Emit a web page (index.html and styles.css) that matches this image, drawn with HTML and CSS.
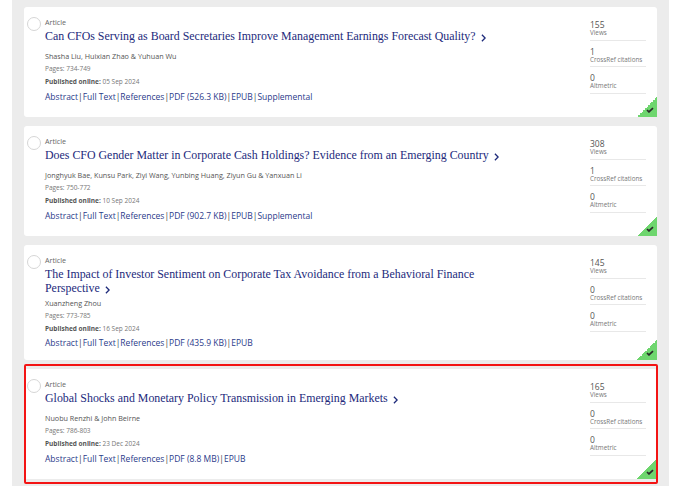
FILE: index.html
```html
<!DOCTYPE html>
<html lang="en">
<head>
<meta charset="utf-8">
<title>Articles</title>
<link rel="stylesheet" href="styles.css">
</head>
<body>
<main class="list">
  <article class="card">
    <span class="radio"></span>
    <div class="main">
      <div class="type">Article</div>
      <h3 class="title"><a>Can CFOs Serving as Board Secretaries Improve Management Earnings Forecast Quality?</a><svg class="chev" viewBox="0 0 6 10" width="5" height="8"><path d="M1 1l4 4-4 4" fill="none" stroke="#1d2a7a" stroke-width="1.6"/></svg></h3>
      <div class="authors">Shasha Liu, Huixian Zhao &amp; Yuhuan Wu</div>
      <div class="meta">Pages: 734-749</div>
      <div class="meta pub"><b>Published online:</b> 05 Sep 2024</div>
      <div class="links"><a>Abstract</a><i>|</i><a>Full Text</a><i>|</i><a>References</a><i>|</i><a>PDF (526.3 KB)</a><i>|</i><a>EPUB</a><i>|</i><a>Supplemental</a></div>
    </div>
    <div class="metrics">
      <div class="metric"><strong>155</strong><span>Views</span></div>
      <div class="metric"><strong>1</strong><span>CrossRef citations</span></div>
      <div class="metric"><strong>0</strong><span>Altmetric</span></div>
    </div>
    <span class="corner"><svg viewBox="0 0 10 8" width="8" height="6"><path d="M1 4l2.6 2.6L9 1.4" fill="none" stroke="#2a2a2a" stroke-width="2.2"/></svg></span>
  </article>
  <article class="card">
    <span class="radio"></span>
    <div class="main">
      <div class="type">Article</div>
      <h3 class="title"><a>Does CFO Gender Matter in Corporate Cash Holdings? Evidence from an Emerging Country</a><svg class="chev" viewBox="0 0 6 10" width="5" height="8"><path d="M1 1l4 4-4 4" fill="none" stroke="#1d2a7a" stroke-width="1.6"/></svg></h3>
      <div class="authors">Jonghyuk Bae, Kunsu Park, Ziyi Wang, Yunbing Huang, Ziyun Gu &amp; Yanxuan Li</div>
      <div class="meta">Pages: 750-772</div>
      <div class="meta pub"><b>Published online:</b> 10 Sep 2024</div>
      <div class="links"><a>Abstract</a><i>|</i><a>Full Text</a><i>|</i><a>References</a><i>|</i><a>PDF (902.7 KB)</a><i>|</i><a>EPUB</a><i>|</i><a>Supplemental</a></div>
    </div>
    <div class="metrics">
      <div class="metric"><strong>308</strong><span>Views</span></div>
      <div class="metric"><strong>1</strong><span>CrossRef citations</span></div>
      <div class="metric"><strong>0</strong><span>Altmetric</span></div>
    </div>
    <span class="corner"><svg viewBox="0 0 10 8" width="8" height="6"><path d="M1 4l2.6 2.6L9 1.4" fill="none" stroke="#2a2a2a" stroke-width="2.2"/></svg></span>
  </article>
  <article class="card card-wrapped">
    <span class="radio"></span>
    <div class="main">
      <div class="type">Article</div>
      <h3 class="title"><a>The Impact of Investor Sentiment on Corporate Tax Avoidance from a Behavioral Finance Perspective</a><svg class="chev" viewBox="0 0 6 10" width="5" height="8"><path d="M1 1l4 4-4 4" fill="none" stroke="#1d2a7a" stroke-width="1.6"/></svg></h3>
      <div class="authors">Xuanzheng Zhou</div>
      <div class="meta">Pages: 773-785</div>
      <div class="meta pub"><b>Published online:</b> 16 Sep 2024</div>
      <div class="links"><a>Abstract</a><i>|</i><a>Full Text</a><i>|</i><a>References</a><i>|</i><a>PDF (435.9 KB)</a><i>|</i><a>EPUB</a></div>
    </div>
    <div class="metrics">
      <div class="metric"><strong>145</strong><span>Views</span></div>
      <div class="metric"><strong>0</strong><span>CrossRef citations</span></div>
      <div class="metric"><strong>0</strong><span>Altmetric</span></div>
    </div>
    <span class="corner"><svg viewBox="0 0 10 8" width="8" height="6"><path d="M1 4l2.6 2.6L9 1.4" fill="none" stroke="#2a2a2a" stroke-width="2.2"/></svg></span>
  </article>
  <article class="card">
    <span class="radio"></span>
    <div class="main">
      <div class="type">Article</div>
      <h3 class="title"><a>Global Shocks and Monetary Policy Transmission in Emerging Markets</a><svg class="chev" viewBox="0 0 6 10" width="5" height="8"><path d="M1 1l4 4-4 4" fill="none" stroke="#1d2a7a" stroke-width="1.6"/></svg></h3>
      <div class="authors">Nuobu Renzhi &amp; John Beirne</div>
      <div class="meta">Pages: 786-803</div>
      <div class="meta pub"><b>Published online:</b> 23 Dec 2024</div>
      <div class="links"><a>Abstract</a><i>|</i><a>Full Text</a><i>|</i><a>References</a><i>|</i><a>PDF (8.8 MB)</a><i>|</i><a>EPUB</a></div>
    </div>
    <div class="metrics">
      <div class="metric"><strong>165</strong><span>Views</span></div>
      <div class="metric"><strong>0</strong><span>CrossRef citations</span></div>
      <div class="metric"><strong>0</strong><span>Altmetric</span></div>
    </div>
    <span class="corner"><svg viewBox="0 0 10 8" width="8" height="6"><path d="M1 4l2.6 2.6L9 1.4" fill="none" stroke="#2a2a2a" stroke-width="2.2"/></svg></span>
    <span class="highlight"></span>
  </article>
</main>
</body>
</html>
```
FILE: styles.css
```css
* { box-sizing: border-box; }
html, body { margin: 0; height: 100%; background: #fff; overflow: hidden; }
body { font-family: "Open Sans", "Liberation Sans", sans-serif; color: #555; }
.list {
  margin: 0 10px 0 12px;
  height: 486px;
  padding: 7px 12px 0;
  background: #ececec;
  display: flex;
  flex-direction: column;
  gap: 9px;
}
.card {
  position: relative;
  display: flex;
  justify-content: space-between;
  flex: none;
  height: 110px;
  background: #fff;
  border-radius: 3px;
  padding: 10px 11px 0 21px;
}
.card-wrapped { height: 115px; }
.radio {
  position: absolute;
  left: 3px;
  top: 10px;
  width: 14px;
  height: 14px;
  border: 1px solid #d6d6d6;
  border-radius: 50%;
}
.main { width: 480px; }
.type { font-size: 7.2px; line-height: 10px; color: #666; }
.title {
  margin: 1.5px 0 4px;
  min-height: 18px;
  font-family: "Liberation Serif", serif;
  font-size: 11.9px;
  line-height: 14.5px;
  font-weight: 400;
  color: #232a7c;
}
.card-wrapped .title { margin-bottom: 2.5px; }
.chev { margin-left: 5px; vertical-align: -2px; }
.authors { font-size: 7.2px; line-height: 11px; color: #555; }
.meta { margin-top: 2px; font-size: 6.5px; line-height: 10px; color: #777; }
.pub { margin-top: 3px; }
.pub b { color: #555; }
.links { margin-top: 4px; font-size: 8.5px; line-height: 12px; color: #2b3a8a; }
.links i { font-style: normal; color: #444; }
.card-wrapped .links { margin-top: 2.5px; }
.metrics { flex: none; width: 56px; margin-top: -3px; }
.metric { border-bottom: 1px solid #e8e8e8; height: 26.5px; padding-top: 6px; }
.metric strong { display: block; font-weight: 400; font-size: 8.5px; line-height: 9px; color: #555; }
.metric span { display: block; font-size: 6.3px; line-height: 8px; color: #777; white-space: nowrap; }
.corner {
  position: absolute;
  right: 0;
  bottom: 0;
  width: 20px;
  height: 20px;
  background: linear-gradient(135deg, transparent 50%, #6ed66e 50%);
}
.corner svg { position: absolute; right: 3px; bottom: 4px; }
.highlight {
  position: absolute;
  inset: -5px -1px -5px 0;
  border: 2px solid #f31414;
  border-radius: 2px;
  pointer-events: none;
}
```
